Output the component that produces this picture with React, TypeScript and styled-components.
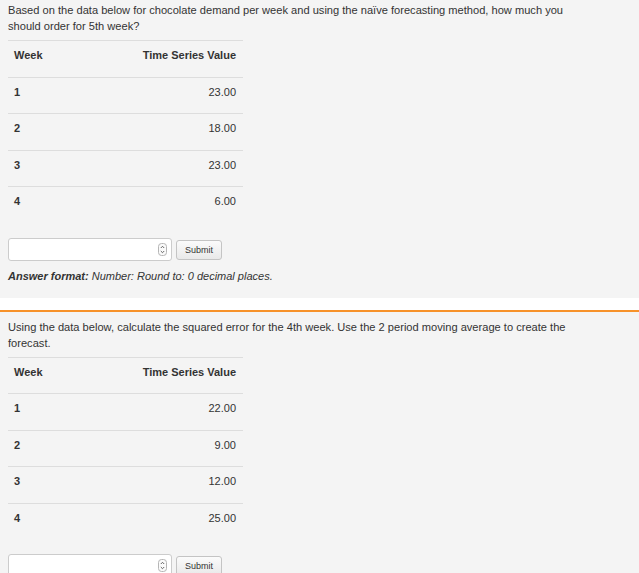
import React from "react";
import styled, { createGlobalStyle } from "styled-components";

const GlobalStyle = createGlobalStyle`
  html, body { margin: 0; padding: 0; background: #ffffff; }
  body {
    font-family: "Liberation Sans", Arial, Helvetica, sans-serif;
    color: #333333;
    font-size: 11px;
  }
`;

const Page = styled.div`
  display: flex;
  flex-direction: column;
  gap: 12px;
  width: 639px;
`;

const Panel = styled.section<{ $accent?: boolean; $top: number }>`
  background: #f4f4f4;
  border-top: ${(p) => (p.$accent ? "2px solid #f7922a" : "none")};
  padding: ${(p) => p.$top}px 8px 14px 8px;
  display: flex;
  flex-direction: column;
`;

const Question = styled.p`
  margin: 0 0 6px 0;
  max-width: 590px;
  font-size: 11.1px;
  line-height: 16px;
  color: #333;
`;

const Table = styled.table`
  width: 235px;
  border-collapse: collapse;
  font-size: 11px;
  color: #333;
`;

const Cell = styled.td<{ $right?: boolean; $bold?: boolean }>`
  border-top: 1px solid #dddddd;
  padding: 7px 7px 14.5px 6px;
  line-height: 14px;
  vertical-align: top;
  text-align: ${(p) => (p.$right ? "right" : "left")};
  font-weight: ${(p) => (p.$bold ? 700 : 400)};
`;

const AnswerRow = styled.div`
  display: flex;
  align-items: center;
  gap: 4px;
  margin-top: 15px;
`;

const InputBox = styled.div`
  position: relative;
  width: 162px;
  height: 21px;
  background: #ffffff;
  border: 1px solid #cccccc;
  border-radius: 3px;
`;

const Spinner = styled.svg`
  position: absolute;
  right: 4px;
  top: 4px;
`;

const SubmitButton = styled.button`
  height: 20px;
  padding: 0 8px;
  font-family: "Liberation Sans", Arial, sans-serif;
  font-size: 9px;
  color: #333;
  background: linear-gradient(#fbfbfb, #e9e9e9);
  border: 1px solid #c4c4c4;
  border-radius: 3px;
  margin-top: 1px;
`;

const Format = styled.p`
  margin: 7px 0 0 0;
  font-size: 11px;
  line-height: 16px;
  font-style: italic;
  color: #333;
  b { font-weight: 700; }
`;

const SpinIcon = () => (
  <Spinner width="9" height="13" viewBox="0 0 9 13">
    <rect x="0.5" y="0.5" width="8" height="12" rx="3" fill="#fafafa" stroke="#b5b5b5" />
    <path d="M2.8 5 L4.5 3.3 L6.2 5" fill="none" stroke="#555" strokeWidth="0.9" />
    <path d="M2.8 8 L4.5 9.7 L6.2 8" fill="none" stroke="#555" strokeWidth="0.9" />
  </Spinner>
);

type Q = { text: string; values: string[]; format?: boolean; accent?: boolean; top: number };

const questions: Q[] = [
  {
    text: "Based on the data below for chocolate demand per week and using the naïve forecasting method, how much you should order for 5th week?",
    values: ["23.00", "18.00", "23.00", "6.00"],
    format: true,
    top: 2,
  },
  {
    text: "Using the data below, calculate the squared error for the 4th week. Use the 2 period moving average to create the forecast.",
    values: ["22.00", "9.00", "12.00", "25.00"],
    accent: true,
    top: 7,
  },
];

const QuestionPanel = ({ q }: { q: Q }) => (
  <Panel $accent={q.accent} $top={q.top}>
    <Question>{q.text}</Question>
    <Table>
      <tbody>
        <tr>
          <Cell as="th" $bold>Week</Cell>
          <Cell as="th" $bold $right>Time Series Value</Cell>
        </tr>
        {q.values.map((v, i) => (
          <tr key={i}>
            <Cell $bold>{i + 1}</Cell>
            <Cell $right>{v}</Cell>
          </tr>
        ))}
      </tbody>
    </Table>
    <AnswerRow>
      <InputBox>
        <SpinIcon />
      </InputBox>
      <SubmitButton>Submit</SubmitButton>
    </AnswerRow>
    {q.format && (
      <Format>
        <b>Answer format:</b> Number: Round to: 0 decimal places.
      </Format>
    )}
  </Panel>
);

export default function App() {
  return (
    <>
      <GlobalStyle />
      <Page>
        {questions.map((q, i) => (
          <QuestionPanel key={i} q={q} />
        ))}
      </Page>
    </>
  );
}
